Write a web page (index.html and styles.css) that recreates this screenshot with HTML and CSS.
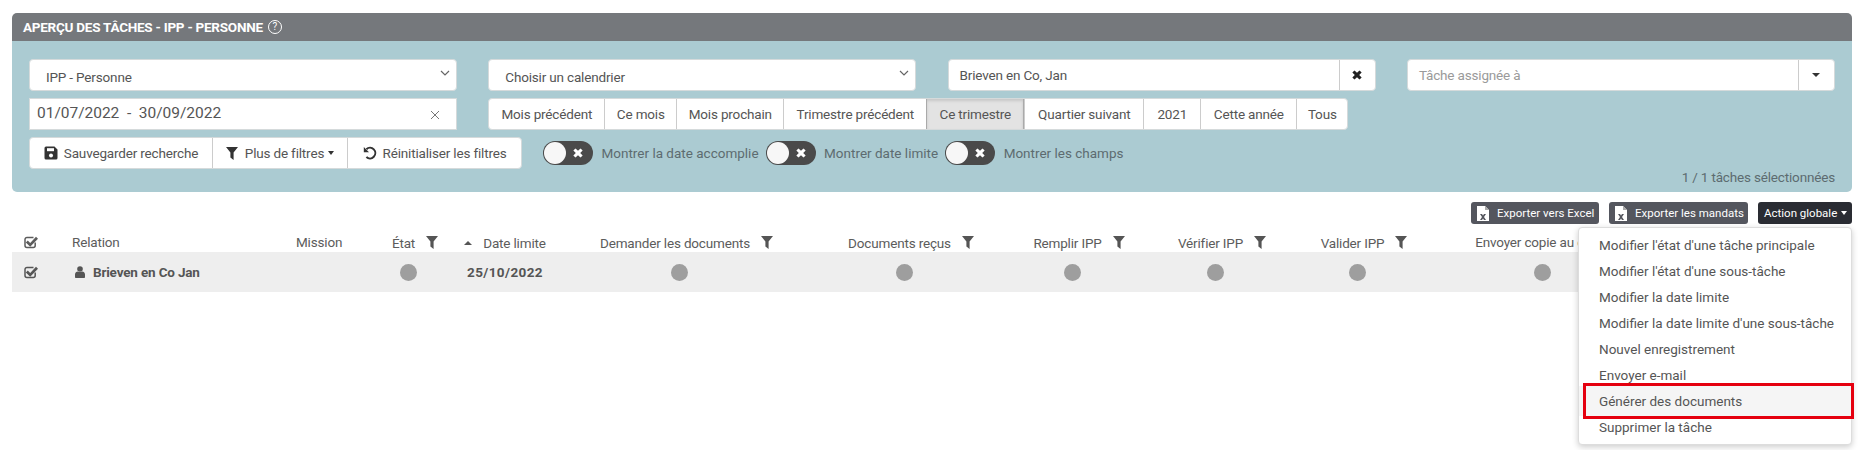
FILE: index.html
```
<!DOCTYPE html>
<html lang="fr">
<head>
<meta charset="utf-8">
<title>Aperçu des tâches</title>
<link rel="stylesheet" href="styles.css">
</head>
<body>
<svg class="defs" width="0" height="0" aria-hidden="true">
  <symbol id="funnel" viewBox="0 0 12 13"><path d="M0 0H12L7.6 5.6V13L4.4 10.4V5.6Z"/></symbol>
  <symbol id="check" viewBox="0 0 14 14"><path d="M11.2 7.5V10.5A2 2 0 0 1 9.2 12.5H3A2 2 0 0 1 1 10.5V4.5A2 2 0 0 1 3 2.5H9.5" fill="none" stroke="currentColor" stroke-width="1.5"/><path d="M3.8 5.6L6.2 8L12 1.8L14 3.8L6.2 11.8L1.8 7.6Z" fill="currentColor"/></symbol>
  <symbol id="xls" viewBox="0 0 12 15"><path d="M0 0H8L12 4V15H0Z" fill="#fff"/><path d="M8 0L12 4H8Z" fill="#aaa"/><path d="M3 8H5L6 9.6L7 8H9L7 11L9 14H7L6 12.4L5 14H3L5 11Z" fill="#54565e"/></symbol>
  <symbol id="cross" viewBox="0 0 12 12"><path d="M3 0.5L6 3.4L9 0.5L11.6 3L8.6 6L11.6 9L9 11.5L6 8.6L3 11.5L0.4 9L3.4 6L0.4 3Z"/></symbol>
</svg>
<main class="page">
  <section class="panel">
    <header class="panel-head">
      <h1 class="panel-title">Aperçu des tâches - IPP - Personne</h1>
      <span class="help">?</span>
    </header>
    <div class="panel-body">
      <div class="filters">
        <div class="field select"><span class="select-text">IPP - Personne</span><svg class="chev" viewBox="0 0 10 6"><path d="M1 1L5 5L9 1" fill="none" stroke="#666" stroke-width="1.2"/></svg></div>
        <div class="field select"><span class="select-text">Choisir un calendrier</span><svg class="chev" viewBox="0 0 10 6"><path d="M1 1L5 5L9 1" fill="none" stroke="#666" stroke-width="1.2"/></svg></div>
        <div class="field combo"><span class="combo-text">Brieven en Co, Jan</span><span class="combo-btn"><svg class="icon-x" fill="#222"><use href="#cross"/></svg></span></div>
        <div class="field combo"><span class="combo-text placeholder">Tâche assignée à</span><span class="combo-btn"><i class="caret"></i></span></div>
        <div class="field date"><span class="date-text">01/07/2022&nbsp; - &nbsp;30/09/2022</span><svg class="date-clear" viewBox="0 0 10 10"><path d="M1 1L9 9M9 1L1 9" stroke="#777" stroke-width="1"/></svg></div>
        <div class="btn-group periods">
          <span class="btn">Mois précédent</span><span class="btn">Ce mois</span><span class="btn">Mois prochain</span><span class="btn">Trimestre précédent</span><span class="btn active">Ce trimestre</span><span class="btn">Quartier suivant</span><span class="btn">2021</span><span class="btn">Cette année</span><span class="btn">Tous</span>
        </div>
        <div class="actions">
          <div class="btn-group">
            <span class="btn btn-save"><svg class="ico" viewBox="0 0 14 14"><path d="M2 0.5H10.5L13.5 3.5V12A1.5 1.5 0 0 1 12 13.5H2A1.5 1.5 0 0 1 0.5 12V2A1.5 1.5 0 0 1 2 0.5Z" fill="#333"/><rect x="3" y="2.2" width="7" height="3" fill="#fff"/><circle cx="7" cy="9.5" r="2" fill="#fff"/></svg>Sauvegarder recherche</span><span class="btn btn-more"><svg class="ico-funnel" fill="#333"><use href="#funnel"/></svg>Plus de filtres<i class="caret small"></i></span><span class="btn btn-reset"><svg class="ico" viewBox="0 0 14 14"><path d="M3.4 3.2A5.3 5.3 0 1 1 3.4 11" fill="none" stroke="#333" stroke-width="2"/><path d="M0.8 1V6.2H6Z" fill="#333"/></svg>Réinitialiser les filtres</span>
          </div>
          <div class="toggles">
            <span class="toggle"><svg class="icon-tx" fill="#fff"><use href="#cross"/></svg></span><span class="toggle-label">Montrer la date accomplie</span>
            <span class="toggle"><svg class="icon-tx" fill="#fff"><use href="#cross"/></svg></span><span class="toggle-label">Montrer date limite</span>
            <span class="toggle"><svg class="icon-tx" fill="#fff"><use href="#cross"/></svg></span><span class="toggle-label">Montrer les champs</span>
          </div>
        </div>
      </div>
      <p class="count">1 / 1 tâches sélectionnées</p>
    </div>
  </section>

  <div class="toolbar">
    <span class="tbtn excel"><svg class="ico-xls"><use href="#xls"/></svg>Exporter vers Excel</span>
    <span class="tbtn mandats"><svg class="ico-xls"><use href="#xls"/></svg>Exporter les mandats</span>
    <div class="menu-wrap">
      <span class="tbtn dark">Action globale<i class="caret small white"></i></span>
      <ul class="menu">
        <li>Modifier l'état d'une tâche principale</li>
        <li>Modifier l'état d'une sous-tâche</li>
        <li>Modifier la date limite</li>
        <li>Modifier la date limite d'une sous-tâche</li>
        <li>Nouvel enregistrement</li>
        <li>Envoyer e-mail</li>
        <li class="hot">Générer des documents<span class="mark"></span></li>
        <li>Supprimer la tâche</li>
      </ul>
    </div>
  </div>

  <table class="tasks">
    <colgroup>
      <col class="c-check"><col class="c-rel"><col class="c-mis"><col class="c-etat"><col class="c-date"><col class="c-dem"><col class="c-doc"><col class="c-rem"><col class="c-ver"><col class="c-val"><col class="c-env"><col>
    </colgroup>
    <thead>
      <tr>
        <th class="cell-check"><svg class="ico-check"><use href="#check"/></svg></th>
        <th class="left">Relation</th>
        <th class="left">Mission</th>
        <th><span class="th-in">État<svg class="ico-f"><use href="#funnel"/></svg></span></th>
        <th><span class="th-sort"><i class="caret up"></i>Date limite</span></th>
        <th><span class="th-in">Demander les documents<svg class="ico-f"><use href="#funnel"/></svg></span></th>
        <th><span class="th-in">Documents reçus<svg class="ico-f"><use href="#funnel"/></svg></span></th>
        <th><span class="th-in">Remplir IPP<svg class="ico-f"><use href="#funnel"/></svg></span></th>
        <th><span class="th-in">Vérifier IPP<svg class="ico-f"><use href="#funnel"/></svg></span></th>
        <th><span class="th-in">Valider IPP<svg class="ico-f"><use href="#funnel"/></svg></span></th>
        <th>Envoyer copie au client</th>
        <th></th>
      </tr>
    </thead>
    <tbody>
      <tr>
        <td class="cell-check"><svg class="ico-check"><use href="#check"/></svg></td>
        <td class="left"><span class="who"><svg class="ico-user" viewBox="0 0 10 12"><circle cx="5" cy="3" r="2.8" fill="#555"/><path d="M0 11V8.4C0 6.6 1.6 5.8 2.6 5.6C3.4 6.2 6.6 6.2 7.4 5.6C8.4 5.8 10 6.6 10 8.4V11C10 11.6 9.6 12 9 12H1C0.4 12 0 11.6 0 11Z" fill="#555"/></svg>Brieven en Co Jan</span></td>
        <td></td>
        <td><i class="dot"></i></td>
        <td class="due">25/10/2022</td>
        <td><i class="dot"></i></td>
        <td><i class="dot"></i></td>
        <td><i class="dot"></i></td>
        <td><i class="dot"></i></td>
        <td><i class="dot"></i></td>
        <td><i class="dot"></i></td>
        <td></td>
      </tr>
    </tbody>
  </table>
</main>
</body>
</html>
```
FILE: styles.css
```
* { box-sizing: border-box; }
html, body { margin: 0; background: #fff; }
body { font-family: Roboto, "Open Sans", sans-serif; font-size: 13.5px; letter-spacing: -0.17px; color: #555; overflow: hidden; height: 450px; }
.defs { position: absolute; }
.page { padding: 13px 6px 0 12px; }

.panel { border-radius: 5px; overflow: hidden; }
.panel-head { height: 28px; background: #75787c; display: flex; align-items: center; padding-left: 11px; gap: 5px; color: #fff; }
.panel-title { margin: 0; font-size: 13.5px; font-weight: 700; text-transform: uppercase; letter-spacing: -0.25px; }
.help { width: 14px; height: 14px; border: 1px solid #fff; border-radius: 50%; font-size: 10px; line-height: 12px; text-align: center; }
.panel-body { height: 151px; background: #abcbd2; padding: 18px 17px 0; position: relative; }

.filters { display: grid; grid-template-columns: repeat(4, 428px); column-gap: 31.3px; row-gap: 7px; }
.field { height: 32px; background: #fff; border: 1px solid #d5dadb; border-radius: 4px; display: flex; align-items: center; }
.select { padding: 4px 6px 0 16px; justify-content: space-between; }
.chev { width: 10px; height: 6px; margin-bottom: 8px; }
.combo-text { flex: 1; padding-left: 11px; padding-bottom: 1px; }
.placeholder { color: #9a9a9a; }
.combo-btn { width: 36px; height: 100%; border-left: 1px solid #ccc; display: flex; align-items: center; justify-content: center; }
.icon-x { width: 10px; height: 10px; }
.date { padding: 0 16px 0 7px; border-radius: 0; justify-content: space-between; }
.date-text { font-size: 15.5px; letter-spacing: -0.02px; padding-bottom: 2px; }
.date-clear { width: 10px; height: 10px; margin-top: 2px; }

.btn-group { display: flex; height: 32px; background: #fff; border: 1px solid #d5dadb; border-radius: 4px; width: max-content; }
.periods { grid-column: span 3; }
.btn { display: flex; align-items: center; justify-content: center; padding: 0; border-left: 1px solid #ccc; white-space: nowrap; }
.btn:first-child { border-left: 0; }
.periods .btn:nth-child(1) { width: 115px; }
.periods .btn:nth-child(2) { width: 72px; }
.periods .btn:nth-child(3) { width: 107px; }
.periods .btn:nth-child(4) { width: 143px; }
.periods .btn:nth-child(5) { width: 98px; }
.periods .btn:nth-child(6) { width: 119px; }
.periods .btn:nth-child(7) { width: 57px; }
.periods .btn:nth-child(8) { width: 96px; }
.periods .btn:nth-child(9) { width: 51px; }
.btn.active { background: #e3e3e3; border-left-color: #aaa; border-right: 1px solid #aaa; box-shadow: inset 0 2px 3px rgba(0,0,0,.12); }

.actions { grid-column: 1 / -1; display: flex; align-items: center; }
.btn-save { width: 182px; }
.btn-more { width: 135px; }
.btn-reset { width: 174px; }
.ico { width: 14px; height: 14px; margin-right: 6px; flex: none; }
.ico-funnel { width: 12px; height: 13px; margin-right: 7px; flex: none; }
.caret { display: inline-block; width: 0; height: 0; border-left: 4px solid transparent; border-right: 4px solid transparent; border-top: 4px solid #333; }
.caret.small { margin-left: 4px; border-left-width: 3.5px; border-right-width: 3.5px; }
.caret.white { border-top-color: #fff; }
.caret.up { border-top: 0; border-bottom: 4px solid #555; margin-right: 11px; }

.toggles { display: flex; align-items: center; margin-left: 21px; }
.toggle { width: 50px; height: 24px; border-radius: 12px; background: #4a4a4a; display: flex; align-items: center; justify-content: flex-end; padding-right: 10px; position: relative; flex: none; }
.toggle::before { content: ""; position: absolute; left: 1px; top: 1px; width: 22px; height: 22px; border-radius: 50%; background: #f7f7f7; }
.icon-tx { width: 10px; height: 10px; }
.toggle-label { color: #5d6b70; margin: 0 7px 0 8.5px; letter-spacing: 0; }

.count { position: absolute; right: 17px; bottom: 7px; margin: 0; color: #5d6b70; }

.toolbar { display: flex; justify-content: flex-end; gap: 10px; margin-top: 10px; height: 22px; }
.tbtn { height: 22px; display: flex; align-items: center; padding: 0 6px; background: #54565e; color: #fff; font-size: 11.5px; letter-spacing: 0; border-radius: 3px; white-space: nowrap; }
.tbtn.excel { width: 128px; }
.tbtn.mandats { width: 139px; }
.tbtn.dark { background: #2a2c33; width: 94px; }
.ico-xls { width: 12px; height: 15px; margin-right: 8px; flex: none; }
.menu-wrap { position: relative; }
.menu { position: absolute; z-index: 5; right: 0; top: 25px; width: 274px; height: 218px; margin: 0; padding: 4px 0; list-style: none; font-size: 13.5px; background: #fff; border: 1px solid #ddd; border-radius: 4px; box-shadow: 0 2px 6px rgba(0,0,0,.2); }
.menu li { height: 26px; line-height: 26px; padding-left: 20px; white-space: nowrap; position: relative; color: #555; letter-spacing: 0; }
.menu .hot { background: #f5f5f5; box-shadow: 0 -2px 0 #f5f5f5, 0 2px 0 #f5f5f5; }
.mark { position: absolute; left: 4px; top: -5px; width: 271px; height: 36px; border: 3px solid #e5000f; }

.tasks { margin-top: 8px; width: 1840px; table-layout: fixed; border-collapse: collapse; }
.c-check { width: 60px; } .c-rel { width: 224px; } .c-mis { width: 74px; }
.c-etat { width: 76px; } .c-date { width: 118px; } .c-dem { width: 231px; } .c-doc { width: 218px; }
.c-rem { width: 118px; } .c-ver { width: 168px; } .c-val { width: 116px; } .c-env { width: 254px; }
.tasks th { height: 20px; font-weight: 400; color: #5c5c5c; text-align: center; white-space: nowrap; padding: 0; }
.tasks td { height: 40px; background: #eee; text-align: center; padding: 0; vertical-align: middle; }
.tasks .left { text-align: left; }
.cell-check { text-align: left !important; padding-left: 12px !important; color: #555; }
.ico-check { width: 14px; height: 14px; display: block; }
.th-in { display: inline-flex; align-items: center; margin-left: 14px; vertical-align: middle; }
.th-sort { display: inline-flex; align-items: center; vertical-align: middle; }
.ico-f { width: 12px; height: 13px; margin-left: 11px; fill: #555; }
.who { display: flex; align-items: center; font-weight: 700; }
.ico-user { width: 10px; height: 12px; margin: 0 8px 0 3px; }
.due { font-weight: 700; letter-spacing: 0.4px; }
.dot { display: block; width: 17px; height: 17px; border-radius: 50%; background: #9e9e9e; margin: 0 auto; }
```
